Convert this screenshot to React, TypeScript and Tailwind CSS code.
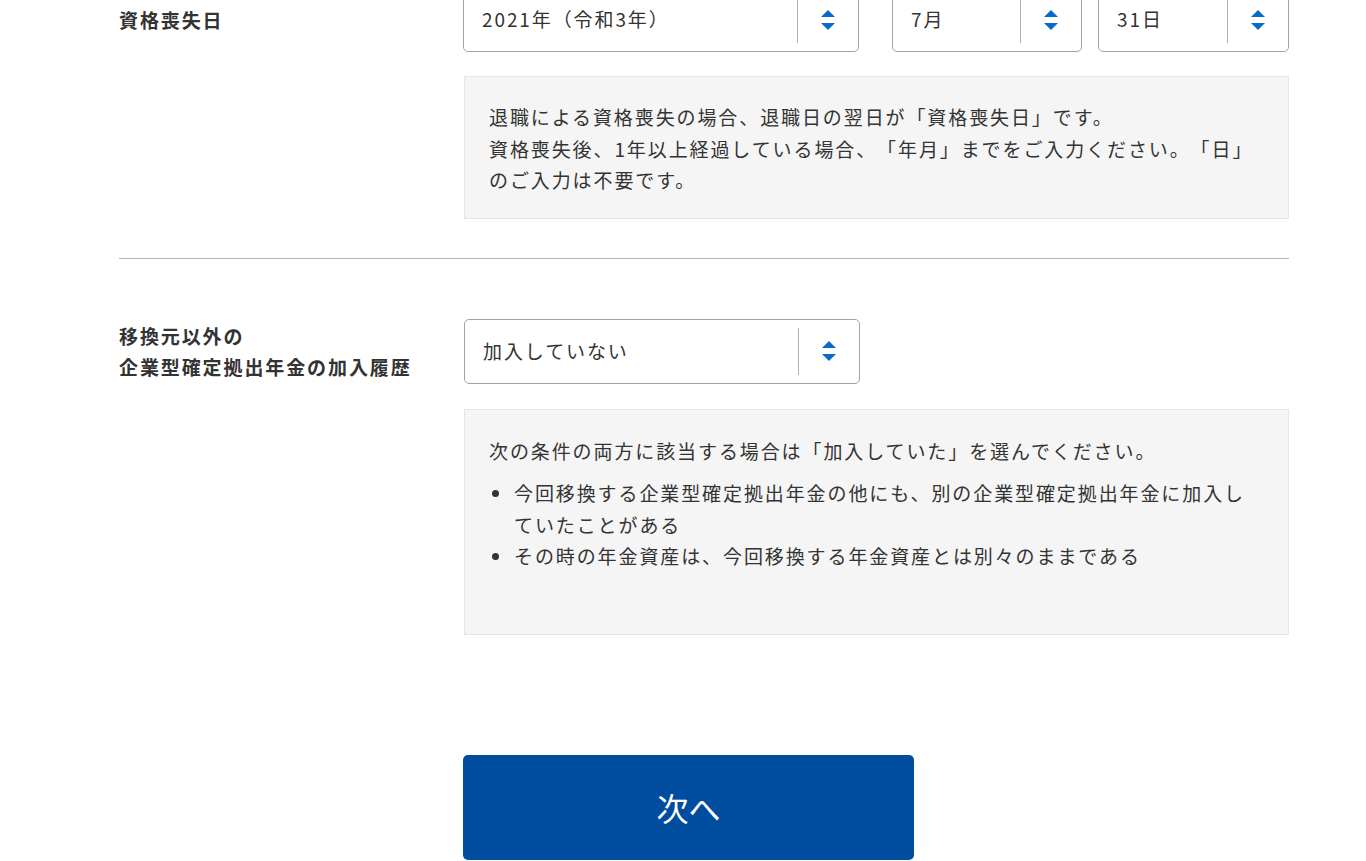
import React from 'react';

const Arrows = () => (
    <svg width="14" height="20" viewBox="0 0 14 20" className="block">
        <polygon points="7,0 14,7 0,7" fill="#0a6bc6" />
        <polygon points="0,13 14,13 7,20" fill="#0a6bc6" />
    </svg>
);

const SelectBox = ({ value, width }: { value: string; width: string }) => (
    <div className={`${width} h-[65px] flex items-center border border-[#a3a3a3] rounded-[5px] bg-white`}>
        <span className="flex-1 pl-[18px] truncate">{value}</span>
        <span className="w-px self-stretch my-[8px] bg-[#b0b0b0]" />
        <span className="w-[60px] flex justify-center">
            <Arrows />
        </span>
    </div>
);

export default function App() {
    return (
        <div className="h-[861px] overflow-hidden bg-white text-[#333] text-[19px] tracking-[0.1em] [text-spacing-trim:space-all] font-['Noto_Sans_CJK_JP','Noto_Sans',sans-serif]">
            <div className="ml-[119px] w-[1170px] -mt-[13px]">
                {/* 資格喪失日 */}
                <div className="flex items-center">
                    <div className="w-[345px] font-bold leading-[31px]">資格喪失日</div>
                    <div className="flex">
                        <SelectBox value="2021年（令和3年）" width="w-[396px]" />
                        <div className="ml-[33px]">
                            <SelectBox value="7月" width="w-[190px]" />
                        </div>
                        <div className="ml-[16px]">
                            <SelectBox value="31日" width="w-[191px]" />
                        </div>
                    </div>
                </div>
                <div className="ml-[345px] mt-[24px] bg-[#f5f5f5] border border-[#e6e6e6] px-[24px] pt-[24px] pb-[22px] leading-[31.5px]">
                    <p>退職による資格喪失の場合、退職日の翌日が「資格喪失日」です。</p>
                    <p>資格喪失後、1年以上経過している場合、「年月」までをご入力ください。「日」のご入力は不要です。</p>
                </div>

                <hr className="mt-[39px] border-0 border-t border-[#b3b3b3]" />

                {/* 加入履歴 */}
                <div className="flex items-center mt-[60px]">
                    <div className="w-[345px] font-bold leading-[31px]">
                        移換元以外の
                        <br />
                        企業型確定拠出年金の加入履歴
                    </div>
                    <SelectBox value="加入していない" width="w-[396px]" />
                </div>
                <div className="ml-[345px] mt-[25px] bg-[#f5f5f5] border border-[#e6e6e6] px-[24px] pt-[25px] pb-[62px] leading-[31.5px]">
                    <p>次の条件の両方に該当する場合は「加入していた」を選んでください。</p>
                    <ul className="mt-[11px]">
                        <li className="flex">
                            <span className="w-[25px] shrink-0 flex pt-[13px] pl-[3px]">
                                <span className="w-[7px] h-[7px] rounded-full bg-[#333]" />
                            </span>
                            <span>今回移換する企業型確定拠出年金の他にも、別の企業型確定拠出年金に加入していたことがある</span>
                        </li>
                        <li className="flex">
                            <span className="w-[25px] shrink-0 flex pt-[13px] pl-[3px]">
                                <span className="w-[7px] h-[7px] rounded-full bg-[#333]" />
                            </span>
                            <span>その時の年金資産は、今回移換する年金資産とは別々のままである</span>
                        </li>
                    </ul>
                </div>

                <button className="mt-[120px] ml-[344px] w-[451px] h-[105px] rounded-[5px] bg-[#004da0] text-white text-[32px] tracking-normal">
                    次へ
                </button>
            </div>
        </div>
    );
}
